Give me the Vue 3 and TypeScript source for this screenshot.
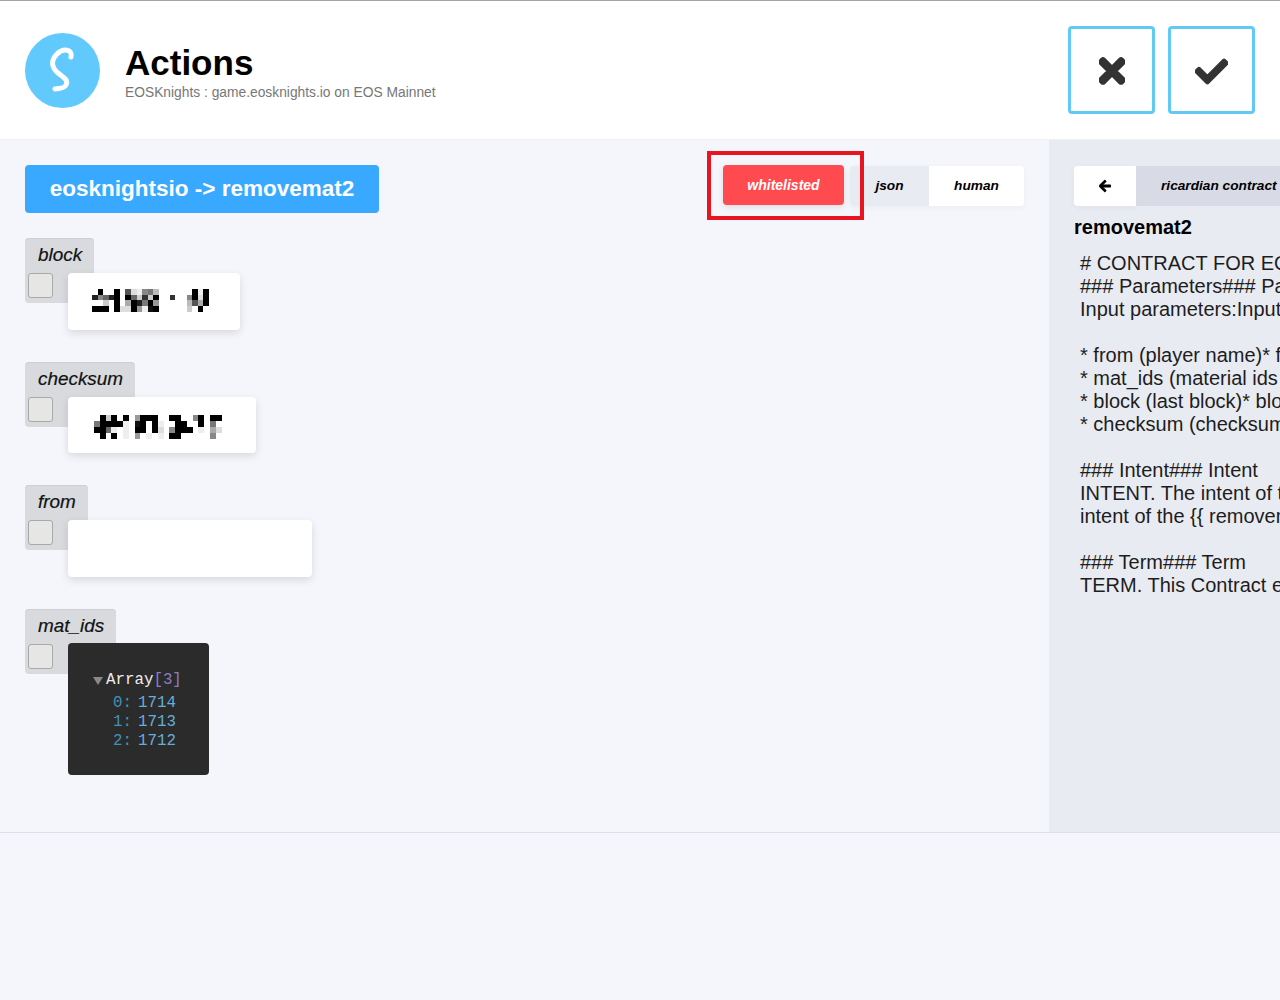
<script setup lang="ts">
interface Field {
  name: string
  mosaic?: string[]
  width: number
}

const fields: Field[] = [
  {
    name: 'block',
    width: 172,
    mosaic: ['0f00f0a21784000000f1f', 'd79df0f93c3f00c007f2f', '0030f05fd8f6000004a5f', 'fff0f22f61ef0000030f0'],
  },
  {
    name: 'checksum',
    width: 188,
    mosaic: ['0f3f0f06fff00ff007f0ff', '8ffff10ef0f100ff00f080', 'ff91010ff0f207fff01052', '0f0f01060101 0ff0000070'.replace(' ', '')],
  },
  { name: 'from', width: 244 },
]

const items = [
  { key: '0:', num: '1714' },
  { key: '1:', num: '1713' },
  { key: '2:', num: '1712' },
]

const cells = (rows: string[]) => rows.flatMap((row) => row.split(''))
const shade = (c: string) => {
  const v = 255 - parseInt(c, 16) * 17
  return `rgb(${v},${v},${v})`
}

const contract = [
  '# CONTRACT FOR EOSKnights',
  '### Parameters### Parameters',
  'Input parameters:Input parameters:',
  '',
  '* from (player name)* from (player name)',
  '* mat_ids (material ids to remove)',
  '* block (last block)* block (last block)',
  '* checksum (checksum)* checksum (checksum)',
  '',
  '### Intent### Intent',
  'INTENT. The intent of the {{ removemat2 }}',
  'intent of the {{ removemat2 }} action is',
  '',
  '### Term### Term',
  'TERM. This Contract expires at the end',
]
</script>

<template>
  <div class="page">
    <header class="header">
      <div class="logo">
        <svg viewBox="0 0 75 75" width="75" height="75">
          <path d="M46 24 C48 16 38 15 32 21 C25 28 27 35 33 40 C38 44 44 47 41 52 C39 56 35 55 30 56" fill="none" stroke="#fff" stroke-width="5" stroke-linecap="round" />
        </svg>
      </div>
      <div class="titles">
        <h1>Actions</h1>
        <p>EOSKnights : game.eosknights.io on EOS Mainnet</p>
      </div>
      <div class="actions">
        <button class="square">
          <svg class="icon" viewBox="0 0 352 512" width="26" height="38">
            <path fill="#333" stroke="#333" stroke-width="22" d="M242.72 256l100.07-100.07c12.28-12.28 12.28-32.19 0-44.48l-22.24-22.24c-12.28-12.28-32.19-12.28-44.48 0L176 189.28 75.93 89.21c-12.28-12.28-32.19-12.28-44.48 0L9.21 111.45c-12.28 12.28-12.28 32.19 0 44.48L109.28 256 9.21 356.07c-12.28 12.28-12.28 32.19 0 44.48l22.24 22.24c12.28 12.28 32.2 12.28 44.48 0L176 322.72l100.07 100.07c12.28 12.28 32.2 12.28 44.48 0l22.24-22.24c12.28-12.28 12.28-32.19 0-44.48L242.72 256z" />
          </svg>
        </button>
        <button class="square">
          <svg class="icon" viewBox="0 0 512 512" width="33" height="33">
            <path fill="#333" stroke="#333" stroke-width="18" d="M173.898 439.404l-166.4-166.4c-9.997-9.997-9.997-26.206 0-36.204l36.203-36.204c9.997-10.998 26.207-9.998 36.204 0L192 312.69 432.095 72.596c9.997-9.997 26.207-9.997 36.204 0l36.203 36.204c9.997 9.997 9.997 26.206 0 36.204l-294.4 294.401c-9.998 9.997-26.207 9.997-36.204-.001z" />
          </svg>
        </button>
      </div>
    </header>

    <main class="main">
      <section class="content">
        <div class="toolbar">
          <div class="action-name">eosknightsio -&gt; removemat2</div>
          <div class="whitelisted">
            whitelisted
            <span class="highlight"></span>
          </div>
          <div class="tabs">
            <span class="tab tab-off">json</span>
            <span class="tab tab-on">human</span>
          </div>
        </div>

        <div v-for="f in fields" :key="f.name" class="field">
          <div class="label">
            <span class="label-text">{{ f.name }}</span>
            <span class="check"></span>
          </div>
          <div class="value" :style="{ width: f.width + 'px' }">
            <div v-if="f.mosaic" class="mosaic" :class="f.name">
              <i v-for="(c, i) in cells(f.mosaic)" :key="i" :style="{ background: shade(c) }"></i>
            </div>
          </div>
        </div>

        <div class="field">
          <div class="label">
            <span class="label-text">mat_ids</span>
            <span class="check"></span>
          </div>
          <div class="tree">
            <div class="tree-head"><span class="caret"></span>Array<span class="bracket">[3]</span></div>
            <div class="tree-body">
              <div v-for="item in items" :key="item.key" class="tree-row">
                <span class="key">{{ item.key }}</span>
                <span class="num">{{ item.num }}</span>
              </div>
            </div>
          </div>
        </div>
      </section>

      <aside class="side">
        <div class="side-tabs">
          <span class="back">
            <svg viewBox="0 0 448 512" width="12" height="14">
              <path stroke="#000" stroke-width="34" d="M257.5 445.1l-22.2 22.2c-9.4 9.4-24.6 9.4-33.9 0L7 273c-9.4-9.4-9.4-24.6 0-33.9L201.4 44.7c9.4-9.4 24.6-9.4 33.9 0l22.2 22.2c9.5 9.5 9.3 25-.4 34.3L136.6 216H424c13.3 0 24 10.7 24 24v32c0 13.3-10.7 24-24 24H136.6l120.5 114.8c9.8 9.3 10 24.8.4 34.3z" />
            </svg>
          </span>
          <span class="ricardian">ricardian contract</span>
        </div>
        <h2>removemat2</h2>
        <div class="contract">
          <div v-for="(line, i) in contract" :key="i" class="line">{{ line }}</div>
        </div>
      </aside>
    </main>
  </div>
</template>

<style>
html, body {
  margin: 0;
  background: #f5f6fb;
  overflow: hidden;
}
</style>

<style scoped>
.page {
  width: 1280px;
  height: 1000px;
  overflow: hidden;
  background: #f5f6fb;
  font-family: "Liberation Sans", Arial, sans-serif;
  color: #000;
}

.header {
  display: flex;
  align-items: center;
  box-sizing: border-box;
  height: 140px;
  padding: 0 25px;
  background: #fff;
  border-top: 1px solid #a4a4a4;
  border-bottom: 1px solid #eff0f4;
}

.logo {
  width: 75px;
  height: 75px;
  border-radius: 50%;
  background: #62c9fd;
  flex: none;
  margin-top: 1px;
}

.logo svg {
  display: block;
}

.titles {
  margin-left: 25px;
  margin-top: 5px;
}

h1 {
  margin: 0;
  font-size: 35px;
  line-height: 40px;
  font-weight: 700;
}

.titles p {
  margin: 1px 0 0;
  font-size: 13.8px;
  line-height: 18px;
  color: #777;
}

.actions {
  display: flex;
  gap: 13px;
  margin-left: auto;
}

.square {
  display: flex;
  align-items: center;
  justify-content: center;
  box-sizing: border-box;
  width: 87px;
  height: 88px;
  padding: 0;
  background: #fff;
  border: 3px solid #62c9f5;
  border-radius: 4px;
}

.icon {
  margin-top: 2px;
}

.main {
  display: flex;
  height: 692px;
  border-bottom: 1px solid #dfe1e8;
}

.content {
  box-sizing: border-box;
  width: 1049px;
  padding: 25px 25px 0;
}

.toolbar {
  display: flex;
  align-items: flex-start;
  margin-bottom: 25px;
}

.action-name {
  box-sizing: border-box;
  width: 354px;
  height: 48px;
  line-height: 48px;
  text-align: center;
  background: #39a9ff;
  border-radius: 4px;
  color: #fff;
  font-size: 22.5px;
  font-weight: 700;
  margin-right: auto;
}

.whitelisted {
  position: relative;
  width: 121px;
  height: 40px;
  line-height: 40px;
  text-align: center;
  background: #ff4a4f;
  border-radius: 4px;
  color: #fff;
  font-size: 14px;
  font-weight: 700;
  font-style: italic;
  box-shadow: 0 2px 6px rgba(0, 0, 0, 0.1);
}

.highlight {
  position: absolute;
  top: -14px;
  left: -16px;
  right: -20px;
  bottom: -15px;
  border: 4px solid #e8141f;
}

.tabs {
  display: flex;
  margin: 1px 0 0 6px;
  border-radius: 4px;
  box-shadow: 0 2px 6px rgba(0, 0, 0, 0.04);
}

.tab {
  height: 40px;
  line-height: 40px;
  text-align: center;
  font-size: 13.7px;
  font-weight: 700;
  font-style: italic;
}

.tab-off {
  width: 79px;
  background: #e9ebf2;
  border-radius: 4px 0 0 4px;
}

.tab-on {
  width: 95px;
  background: #fff;
  border-radius: 0 4px 4px 0;
}

.field {
  margin-bottom: 32px;
}

.label {
  display: flex;
  flex-direction: column;
  align-items: flex-start;
  box-sizing: border-box;
  width: fit-content;
  height: 65px;
  padding: 0 12px 0 3px;
  background: #d9dade;
  border-radius: 4px;
  box-shadow: inset 0 1px 0 #cfd0d4;
}

.label-text {
  margin-left: 10px;
  font-size: 18.9px;
  font-style: italic;
  line-height: 34px;
  color: #111;
  -webkit-text-stroke: 0.2px #111;
}

.check {
  box-sizing: border-box;
  display: block;
  width: 25px;
  height: 25px;
  margin-top: 1px;
  background: #e6e6e4;
  border: 1px solid #a9a9a9;
  border-radius: 3px;
}

.value {
  display: flex;
  align-items: center;
  box-sizing: border-box;
  height: 56.67px;
  margin: -30px 0 0 43px;
  padding-left: 24px;
  background: #fff;
  border-radius: 4px;
  box-shadow: 0 3px 8px rgba(0, 0, 0, 0.12);
  position: relative;
}

.mosaic {
  display: grid;
  height: 23px;
}

.mosaic.block {
  grid-template-columns: repeat(21, 5.57px);
  grid-template-rows: repeat(4, 1fr);
  margin-top: -2px;
}

.mosaic.checksum {
  grid-template-columns: repeat(22, 5.8px);
  grid-template-rows: repeat(4, 1fr);
  margin-left: 2px;
  margin-top: 5px;
  height: 24px;
}

.tree {
  position: relative;
  box-sizing: border-box;
  width: 141px;
  height: 132px;
  margin: -31px 0 0 43px;
  padding: 28px 0 0 25px;
  background: #2b2b2b;
  border-radius: 4px;
  font-family: "Liberation Mono", monospace;
  font-size: 15.8px;
  line-height: 19px;
  color: #eee;
}

.tree-head {
  display: flex;
  align-items: center;
  white-space: pre;
}

.caret {
  width: 0;
  height: 0;
  margin-right: 3px;
  margin-top: 1px;
  border-left: 5px solid transparent;
  border-right: 5px solid transparent;
  border-top: 8px solid #8a8a8a;
}

.bracket {
  color: #8a7fc4;
}

.tree-body {
  margin-top: 4px;
}

.tree-row {
  display: flex;
  gap: 6px;
  padding-left: 20px;
  white-space: pre;
}

.key {
  color: #3f93b8;
}

.num {
  color: #63aedb;
}

.side {
  box-sizing: border-box;
  flex: 1;
  min-width: 0;
  overflow: hidden;
  padding: 26px 0 0 25px;
  background: #e9ebf2;
}

.side-tabs {
  display: flex;
  width: 260px;
  height: 40px;
}

.back {
  display: flex;
  align-items: center;
  justify-content: center;
  flex: none;
  width: 62px;
  background: #fff;
  border-radius: 4px 0 0 4px;
  box-shadow: 0 2px 6px rgba(0, 0, 0, 0.04);
}

.ricardian {
  flex: 1;
  padding-left: 25px;
  line-height: 40px;
  background: #d8dbe5;
  font-size: 13.7px;
  font-weight: 700;
  font-style: italic;
  white-space: nowrap;
}

h2 {
  margin: 10px 0 0;
  font-size: 20px;
  line-height: 23px;
  font-weight: 700;
}

.contract {
  margin: 13px 0 0 6px;
  font-size: 20px;
  line-height: 23px;
  color: #1d1d1d;
  white-space: pre;
}

.line {
  height: 23px;
}
</style>
